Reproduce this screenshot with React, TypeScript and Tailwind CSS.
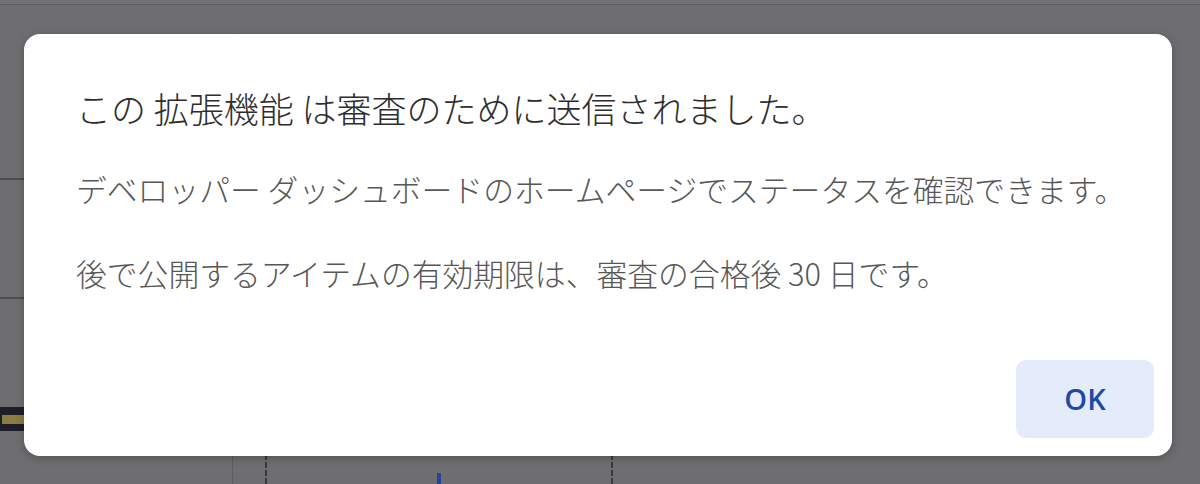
const jp = "font-['Noto_Sans_CJK_JP','Noto_Sans',sans-serif]"

// background page seen through the dim overlay
const Backdrop = () => {
    return (
        <div className="flex flex-col w-full h-full">
            <div className="h-[5px] border-b border-[#5c5c5e] bg-[#727274]" />
            <div className="h-[28px]" />
            <div className="flex flex-1">
                <div className="w-[233px] border-r border-[#5e5e60] flex flex-col">
                    <div className="h-[147px] border-b-2 border-[#4e4e52]" />
                    <div className="h-[119px] border-b-2 border-[#4e4e52]" />
                    <div className="h-[108px]" />
                    <div className="h-[24px] bg-[#1e1e28] flex items-center pl-[2px]">
                        <div className="h-[9px] w-full bg-[#8c7c44]" />
                    </div>
                </div>
                <div className="flex-1 flex items-end">
                    <div className="ml-[32px] w-0 h-[30px] border-l-2 border-dashed border-[#3a3a3c]" />
                    <div className="ml-[170px] w-[4px] h-[11px] bg-[#24449a]" />
                    <div className="ml-[170px] w-0 h-[30px] border-l-2 border-dashed border-[#3a3a3c]" />
                </div>
            </div>
        </div>
    )
}

const Dialog = () => {
    return (
        <div className="absolute left-[24px] top-[34px] w-[1148px] h-[422px] rounded-[16px] bg-white shadow-[0_2px_8px_rgba(0,0,0,0.25)] flex flex-col">
            <div className={`pl-[52px] pt-[54px] ${jp} font-light`}>
                <div className="text-[35px] leading-[40px] text-[#2e2e2e]">
                    この 拡張機能 は審査のために送信されました。
                </div>
                <div className="mt-[41px] text-[30.8px] leading-[40px] text-[#575757]">
                    デベロッパー ダッシュボードのホームページでステータスを確認できます。
                </div>
                <div className="mt-[44px] text-[30.8px] leading-[40px] text-[#575757]">
                    後で公開するアイテムの有効期限は、審査の合格後 30 日です。
                </div>
            </div>
            <div className="flex-1 flex items-end justify-end pr-[18px] pb-[18px]">
                <button className="w-[138px] h-[78px] rounded-[10px] bg-[#e4ebfa] text-[#1d4aa6] text-[29px] font-semibold font-['Open_Sans','Roboto',sans-serif] flex items-center justify-center">
                    OK
                </button>
            </div>
        </div>
    )
}

export default function App() {
    return (
        <div className="relative w-[1200px] h-[484px] overflow-hidden bg-[#6e6e70]">
            <Backdrop />
            <Dialog />
        </div>
    )
}
